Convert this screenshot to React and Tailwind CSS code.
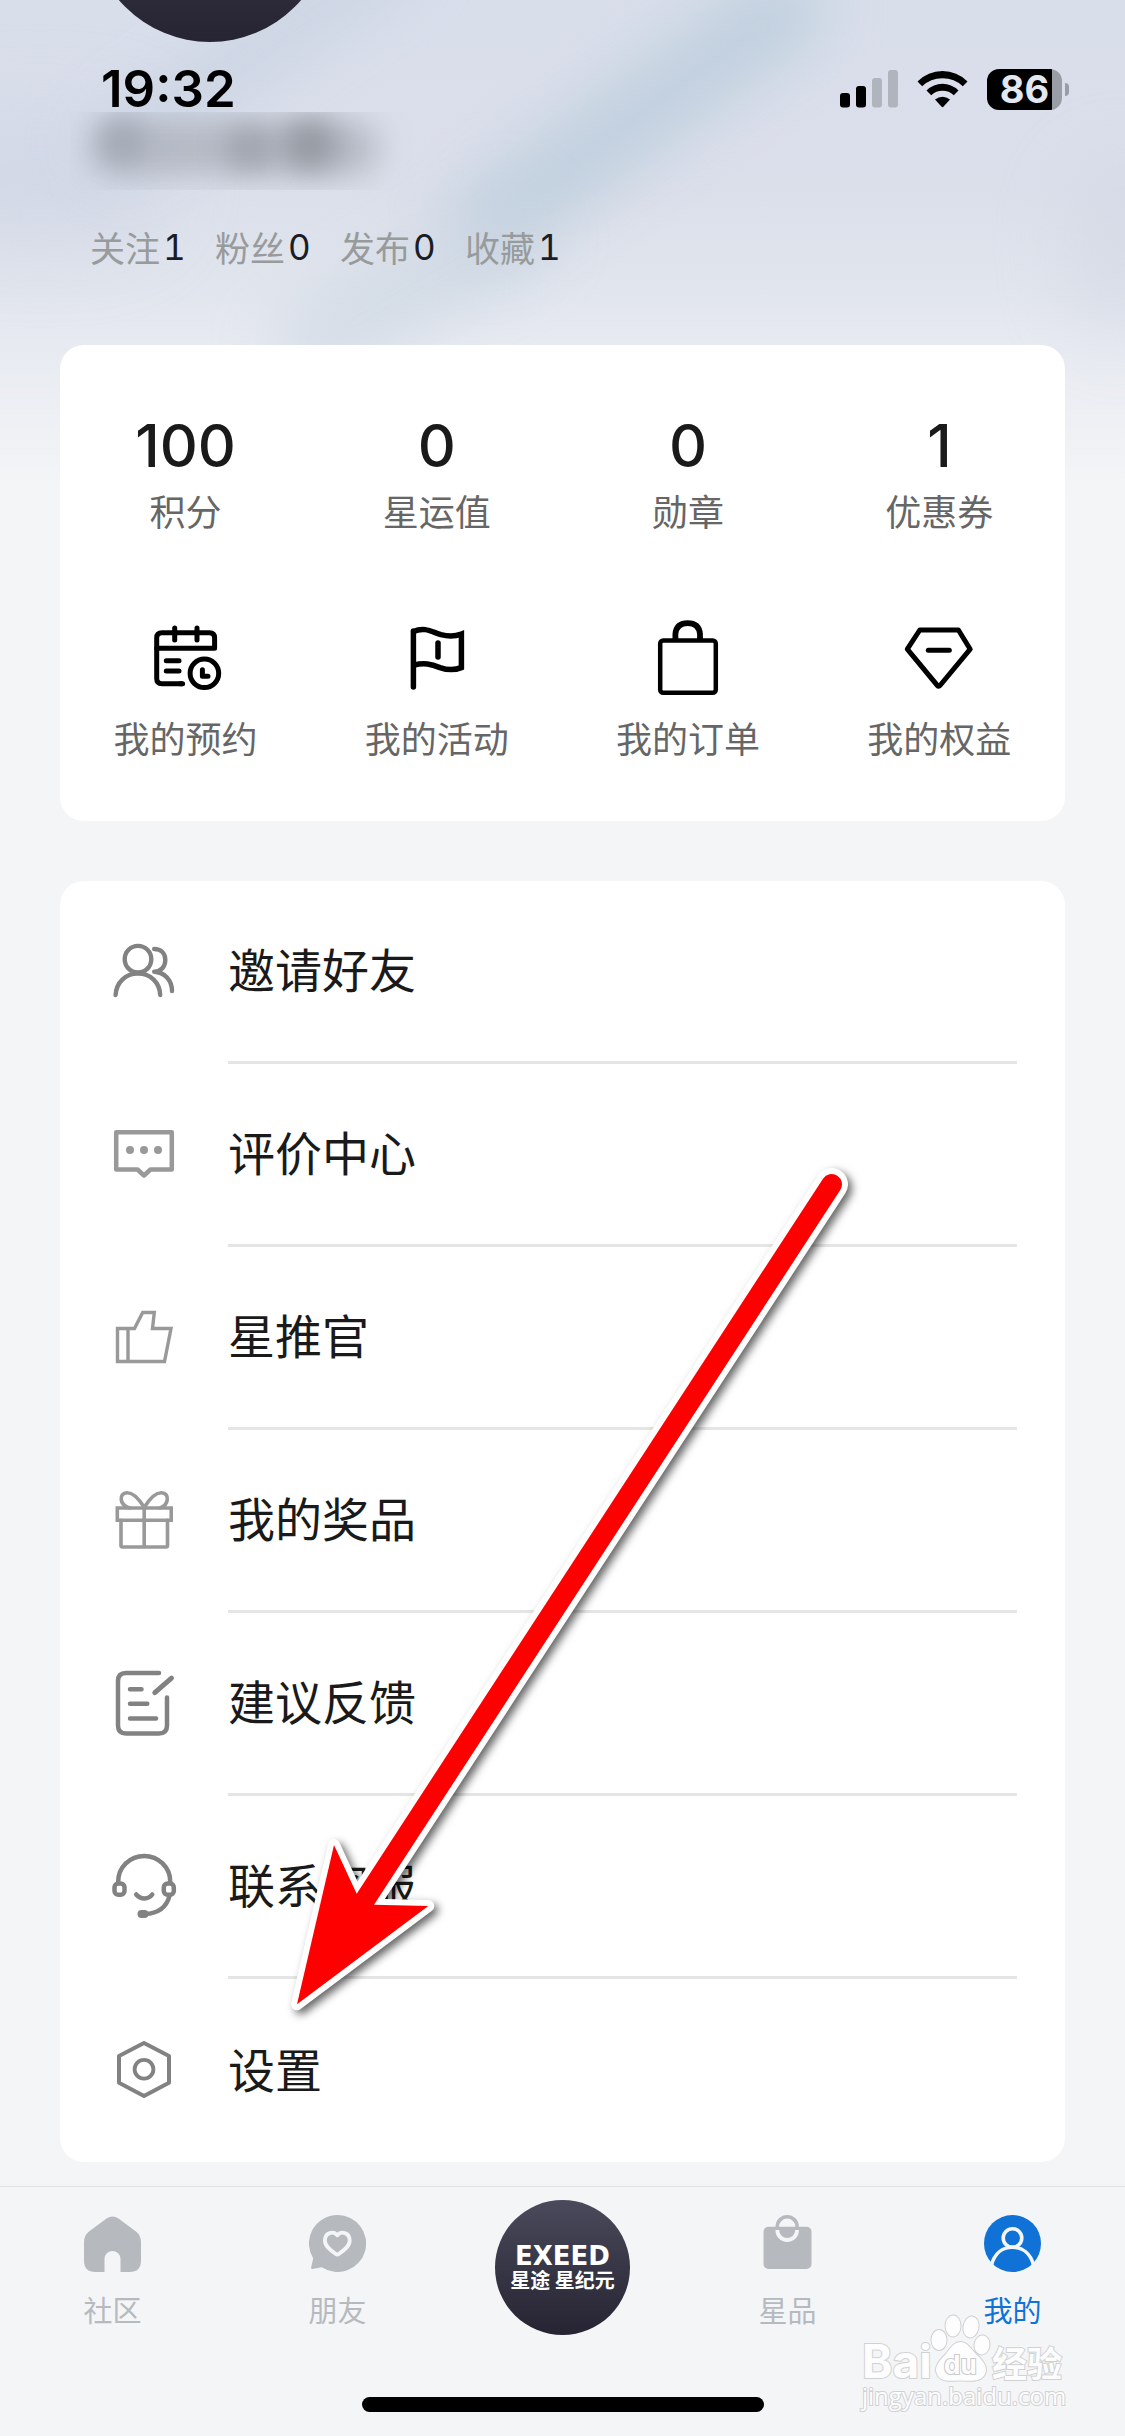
const LATIN = "font-[Inter,'Noto_Sans_CJK_SC',sans-serif]";
const CJK = "font-['Noto_Sans_CJK_SC',sans-serif]";

const counters = [
  { label: "关注", value: 1 },
  { label: "粉丝", value: 0 },
  { label: "发布", value: 0 },
  { label: "收藏", value: 1 },
];

const assets = [
  { label: "积分", value: 100 },
  { label: "星运值", value: 0 },
  { label: "勋章", value: 0 },
  { label: "优惠券", value: 1 },
];

function ShortcutIcon({ children }) {
  return (
    <svg viewBox="0 0 84 84" className="size-[84px]" fill="none" stroke="#000" strokeWidth="5" strokeLinecap="round" strokeLinejoin="round" aria-hidden="true">
      {children}
    </svg>
  );
}

const shortcuts = [
  {
    label: "我的预约",
    icon: (
      <ShortcutIcon>
        <path d="M38.5 67.7H18Q12.7 67.7 12.7 62.5V22Q12.7 16.8 18 16.8H65.4Q70.6 16.8 70.6 22V32.3" strokeLinecap="butt" />
        <path d="M36 67.7H38.6M12.7 32.3H70.6M30.7 12V24M53 12V24M22.3 44.7H35M22.3 55H35" />
        <circle cx="60.4" cy="57.3" r="14.3" />
        <path d="M58.4 53.8V60.3H64" />
      </ShortcutIcon>
    ),
  },
  {
    label: "我的活动",
    icon: (
      <ShortcutIcon>
        <path d="M18.4 15V71M18.4 15.5C30 10.5 37 16 46 18.7C54 20.8 60 20.5 66.4 18V51.6C60 54.2 53 54.4 45 51.6C36 48 29 46.5 19 49.2" strokeLinejoin="miter" strokeWidth="5.5" />
        <path d="M43 27V41" strokeWidth="5.5" />
      </ShortcutIcon>
    ),
  },
  {
    label: "我的订单",
    icon: (
      <ShortcutIcon>
        <rect x="14.2" y="24.5" width="55.6" height="52.2" rx="3" strokeWidth="4.5" />
        <path d="M29.4 24V18Q30.5 7.2 41.7 7.2T54 18V24" strokeLinecap="butt" strokeWidth="5.8" />
      </ShortcutIcon>
    ),
  },
  {
    label: "我的权益",
    icon: (
      <ShortcutIcon>
        <path d="M22.8 14H61.4L73.2 33.2L43 69.5Q41.7 71 40.4 69.5L10.3 33.2Z" />
        <path d="M31.3 34.3H52.3" />
      </ShortcutIcon>
    ),
  },
];

function MenuIcon({ color, width, children }) {
  return (
    <svg viewBox="0 0 72 72" className="size-[72px] shrink-0" fill="none" stroke={color} strokeWidth={width} strokeLinecap="round" strokeLinejoin="round" aria-hidden="true">
      {children}
    </svg>
  );
}

const menu = [
  {
    label: "邀请好友",
    icon: (
      <MenuIcon color="#828282" width="4.4">
        <circle cx="30" cy="24.2" r="13.3" />
        <path d="M7.6 60C8.2 47.5 17.5 38.5 30 38.5S51.8 47.5 52.2 60" />
        <path d="M46.2 14C53 14 57.3 18.5 57.3 25C57.3 31.5 53 36.7 46.2 36.7C56.5 37.3 64 45 64 56" />
      </MenuIcon>
    ),
  },
  {
    label: "评价中心",
    icon: (
      <MenuIcon color="#999999" width="4.5">
        <path d="M8.2 14.2H63.8V51.5H42.5L36 57.5L29.5 51.5H8.2Z" />
        <g fill="#999999" stroke="none">
          <circle cx="22" cy="32" r="4" />
          <circle cx="36" cy="32" r="4" />
          <circle cx="50" cy="32" r="4" />
        </g>
      </MenuIcon>
    ),
  },
  {
    label: "星推官",
    icon: (
      <MenuIcon color="#999999" width="3.4">
        <path d="M9.5 27.5H26.5L34.7 11.5H46.3L44.5 27.5H63L56.5 60.5H9.5ZM20 27.5V60.5" strokeLinejoin="miter" />
      </MenuIcon>
    ),
  },
  {
    label: "我的奖品",
    icon: (
      <MenuIcon color="#999999" width="3.6">
        <path d="M9.3 24H63.2V36.2H9.3Z" strokeLinejoin="miter" />
        <path d="M13 36.2V61.5Q13 63 14.5 63H58Q59.5 63 59.5 61.5V36.2M36.2 24V63" />
        <path d="M36 23C31 15 25.5 8.5 19 8.7C14.5 9 12.9 12 13.2 15.5C13.6 20 17 22.5 21.5 24" />
        <path d="M36.5 23C41.5 15 47 8.5 53.5 8.7C58 9 59.6 12 59.3 15.5C58.9 20 56 22.5 52 24" />
      </MenuIcon>
    ),
  },
  {
    label: "建议反馈",
    icon: (
      <MenuIcon color="#828282" width="4.5">
        <path d="M51 6H18Q10 6 10 14V58.5Q10 66.5 18 66.5H51Q59 66.5 59 58.5V30.5" />
        <path d="M46.8 25.7L63.5 11.2" strokeWidth="5" />
        <path d="M22 22.3H33.5M22 36.8H39.3M22 51.6H48" />
      </MenuIcon>
    ),
  },
  {
    label: "联系客服",
    icon: (
      <MenuIcon color="#828282" width="4.5">
        <path d="M10.2 33V31.5A26 25.6 0 0 1 62.2 31.5V33" />
        <rect x="6.5" y="33.4" width="10" height="11.4" rx="3.8" />
        <rect x="55.8" y="33.4" width="10" height="11.4" rx="3.8" />
        <path d="M61.5 46C58.5 57 50 63.5 37 64" />
        <path d="M33.5 64H36.5" strokeWidth="8" />
        <path d="M28.2 44.5C32.5 49.7 40.5 49.7 44.3 44.5" />
      </MenuIcon>
    ),
  },
  {
    label: "设置",
    icon: (
      <MenuIcon color="#828282" width="4">
        <path d="M36 10L61 23V49.7L36 63L11 49.7V23Z" />
        <circle cx="36" cy="36.3" r="9.4" strokeWidth="3.8" />
      </MenuIcon>
    ),
  },
];

function TabIcon({ children }) {
  return (
    <svg viewBox="0 0 57 57" className="size-[57px]" fill="currentColor" aria-hidden="true">
      {children}
    </svg>
  );
}

const HomeIcon = (
  <TabIcon>
    <path d="M22.5 3.6Q28.5 -.4 34.5 3.6L52 16.5Q57 20.5 57 27V45.5Q57 57 45.5 57H36.5V44A8 8 0 0 0 20.5 44V57H11.5Q0 57 0 45.5V27Q0 20.5 5 16.5Z" />
  </TabIcon>
);

const FriendIcon = (
  <TabIcon>
    <path d="M28.5 0A28.5 28.5 0 1 1 12.8 52.2L3.5 54Q2 54.2 2.1 52.5L4.2 43.5A28.5 28.5 0 0 1 28.5 0Z" />
    <path d="M28.3 20.3C24.5 15.5 16 17.5 15.9 25.5C15.9 31.5 22 35.5 26.7 38.9Q28.3 40 29.9 38.9C34.5 35.5 40.7 31.5 40.7 25.5C40.6 17.5 32 15.5 28.3 20.3Z" fill="none" stroke="#f4f5f7" strokeWidth="3.8" strokeLinejoin="round" />
  </TabIcon>
);

const ShopIcon = (
  <TabIcon>
    <rect x="4.5" y="11.7" width="48" height="42.3" rx="5" />
    <path d="M18.3 13V11.5A9.9 9.7 0 0 1 38.1 11.5V13" fill="none" stroke="currentColor" strokeWidth="3.6" />
    <path d="M18.3 15A9.9 10 0 0 0 38.1 15" fill="none" stroke="#f4f5f7" strokeWidth="3.8" />
  </TabIcon>
);

const MineIcon = (
  <TabIcon>
    <circle cx="28.5" cy="28.5" r="28.5" />
    <g fill="none" stroke="#f4f5f7" strokeWidth="3.6">
      <circle cx="28.5" cy="23" r="9.3" />
      <path d="M7.5 50C10.5 38.5 18.5 32.3 28.5 32.3S46.5 38.5 49.5 50" />
    </g>
  </TabIcon>
);

function Tab({ icon, label, active }) {
  return (
    <button
      type="button"
      aria-current={active ? "page" : undefined}
      className={`flex flex-col items-center gap-4 pt-7 ${active ? "text-[#1072d6]" : "text-[#b6babf]"}`}
    >
      {icon}
      <span className="text-[29px] leading-[42px]">{label}</span>
    </button>
  );
}

function Backdrop() {
  return (
    <div aria-hidden="true" className="absolute inset-x-0 top-0 -z-10 h-[520px] overflow-hidden bg-[linear-gradient(180deg,#d8deea_0px,#dbdfea_190px,#e1e5ed_290px,#e7eaf1_345px,#f4f5f7_490px)]">
      <div className="absolute -left-20 top-28 h-32 w-60 rounded-full bg-[#cfd6e5] opacity-70 blur-[40px]" />
      <div className="absolute left-[60px] top-[20px] h-16 w-96 -rotate-[35deg] rounded-full bg-[#c9d2e2] opacity-80 blur-[30px]" />
      <div className="absolute left-[440px] top-[142px] h-20 w-[440px] origin-[24%_50%] -rotate-[36deg] rounded-full bg-[#bccddc] opacity-85 blur-[30px]" />
      <div className="absolute left-[260px] top-[250px] h-20 w-[300px] -rotate-[30deg] rounded-full bg-[#c9d5e1] opacity-60 blur-[30px]" />
      <div className="absolute -right-14 top-40 h-44 w-28 rounded-full bg-[#cbd1df] opacity-40 blur-[36px]" />
    </div>
  );
}

function StatusBar() {
  return (
    <header className={`relative flex h-28 items-center justify-between pl-[101px] pr-14 pt-[66px] ${LATIN}`}>
      <time className="text-[51px] font-semibold leading-[46px] text-black">19:32</time>
      <div className="flex items-center">
        <svg viewBox="0 0 58 38" className="mr-[19px] h-[38px] w-[58px]" role="img" aria-label="信号">
          <rect x="0" y="23" width="10" height="14.5" rx="3" />
          <rect x="16" y="16" width="10" height="21.5" rx="3" />
          <g fill="#b0b4bd">
            <rect x="32" y="8" width="10" height="29.5" rx="3" />
            <rect x="48" y="0" width="10" height="37.5" rx="3" />
          </g>
        </svg>
        <svg viewBox="0 0 51 37" className="mr-[19px] h-[37px] w-[51px]" role="img" aria-label="无线网络">
          <path d="M.5 10.5Q11 0 25.5 0T50.5 10.5L45.8 15.2Q37.5 7.2 25.5 7.2T5.2 15.2Z" />
          <path d="M9.5 19.5Q16.5 12.8 25.5 12.8T41.5 19.5L36.8 24.2Q32 19.8 25.5 19.8T14.2 24.2Z" />
          <path d="M18 28.5Q25.5 22.8 33 28.5L26.6 35.6Q25.5 36.8 24.4 35.6Z" />
        </svg>
        <div className="flex h-[41px] w-[75px] items-center justify-center rounded-xl bg-[linear-gradient(90deg,#000_65px,#999da6_65px)] text-[38px] font-bold leading-none text-[#e3e7ef]">
          86
        </div>
        <div className="ml-[3px] h-[13px] w-1 rounded-r-full bg-[#999da6]" />
      </div>
    </header>
  );
}

function Arrow() {
  return (
    <svg viewBox="0 0 600 880" className="pointer-events-none absolute left-[215px] top-[274px] h-[880px] w-[600px] drop-shadow-[4px_4px_4px_rgba(0,0,0,0.6)]" aria-hidden="true">
      <path
        d="M81.700 738.700L548 23.700A10.300 10.300 0 0 1 565.300 35L99 749.700L153.300 751L22 849.300L59 690Z"
        fill="#f00"
        stroke="#fff"
        strokeWidth="12"
        strokeLinejoin="round"
        className="[paint-order:stroke]"
      />
    </svg>
  );
}

function Watermark() {
  return (
    <svg viewBox="0 0 206 100" className="pointer-events-none absolute bottom-[16px] right-[58px] h-[100px] w-[206px] overflow-visible" fill="#fdfdfd" stroke="#d0d1d3" strokeWidth="2" aria-hidden="true">
      <g className="[paint-order:stroke]">
        <text x="1" y="58" fontSize="46" fontWeight="700" fontFamily="Inter, sans-serif">Bai</text>
        <ellipse cx="78" cy="20" rx="7.5" ry="10" />
        <ellipse cx="92" cy="6" rx="7.5" ry="10.5" />
        <ellipse cx="110" cy="7" rx="7.5" ry="10.5" transform="rotate(10 110 7)" />
        <ellipse cx="121" cy="25" rx="7.5" ry="9.5" transform="rotate(8 121 25)" />
        <path d="M99.5 22C92 22 88 31 83 36C77 42 73 48 76 54C79 62 88 61 99.5 60.5C111 61 120 62 124 54C127 48 123 42 117 36C111 31 107 22 99.5 22Z" />
        <text x="83" y="54" fontSize="26" fontWeight="700" fontFamily="Inter, sans-serif" stroke="#c9cacd">du</text>
        <text x="131" y="57" fontSize="35" fontWeight="700" fontFamily="'Noto Sans CJK SC', sans-serif">经验</text>
        <text x="1" y="85" fontSize="24" fontFamily="'Open Sans', sans-serif">jingyan.baidu.com</text>
      </g>
    </svg>
  );
}

export default function App() {
  return (
    <div className={`relative isolate flex min-h-screen flex-col overflow-hidden bg-[#f4f5f7] ${CJK}`}>
      <Backdrop />
      <div aria-hidden="true" className="absolute -top-[198px] left-[90px] size-60 rounded-full bg-linear-to-b from-[#4a4a5c] to-[#262432]" />
      <StatusBar />

      <section>
        <div aria-label="昵称" className="relative ml-[70px] h-[78px] w-[350px] overflow-hidden">
          <div className="absolute left-5 top-2 h-14 w-[290px] rounded-full bg-[#a9aeb8] opacity-75 blur-[16px]" />
          <div className="absolute left-7 top-1 h-12 w-12 rounded-full bg-[#9aa1ab] opacity-60 blur-[12px]" />
          <div className="absolute left-[155px] top-3 h-12 w-12 rounded-full bg-[#888c93] opacity-50 blur-[14px]" />
          <div className="absolute left-[212px] top-1 h-14 w-14 rounded-full bg-[#80848b] opacity-60 blur-[14px]" />
        </div>
        <ul className="mt-[33px] flex pl-[90px] text-[35px] leading-[48px]">
          {counters.map((c) => (
            <li key={c.label} className="flex w-[125px] items-center gap-[3px] text-[#979b9c]">
              {c.label}
              <span className={`tabular-nums text-[#1a1c26] ${LATIN}`}>{c.value}</span>
            </li>
          ))}
        </ul>
      </section>

      <main className="mt-[74px] flex flex-col gap-[60px] px-[60px]">
        <section className="grid grid-cols-4 rounded-3xl bg-white pb-[60px] pt-[65px] text-[36px] leading-[48px] text-[#666]">
          {assets.map((a) => (
            <button type="button" key={a.label} className="flex flex-col items-center gap-1">
              <span className={`text-[59px] font-medium leading-[72px] text-[#1a1a1a] ${LATIN}`}>{a.value}</span>
              <span>{a.label}</span>
            </button>
          ))}
          {shortcuts.map((s) => (
            <button type="button" key={s.label} className="mt-[82px] flex flex-col items-center gap-[13px]">
              {s.icon}
              <span>{s.label}</span>
            </button>
          ))}
        </section>

        <section className="relative rounded-3xl bg-white px-12">
          <ul>
            {menu.map((m, i) => (
              <li key={m.label}>
                <a href="#" className="flex h-[183px] items-stretch gap-12">
                  <span className="flex items-center pb-[3px]">{m.icon}</span>
                  <span className={`flex flex-1 items-center pb-[6px] text-[47px] leading-[64px] text-[#1a1a1a] ${i < menu.length - 1 ? "border-b-[3px] border-[#e5e5e5]" : ""}`}>
                    {m.label}
                  </span>
                </a>
              </li>
            ))}
          </ul>
          <Arrow />
        </section>
      </main>

      <nav className="relative mt-6 border-t border-[#e1e2e5] pb-6">
        <div className="grid grid-cols-5 items-start">
          <Tab icon={HomeIcon} label="社区" />
          <Tab icon={FriendIcon} label="朋友" />
          <div className="flex justify-center pt-[13px]">
            <button type="button" className="flex size-[135px] flex-col items-center justify-center rounded-full bg-linear-to-b from-[#4a4a5c] to-[#262432] text-white">
              <span className="font-['DejaVu_Sans',sans-serif] text-[26px] font-bold leading-[24px]">EXEED</span>
              <span className="text-[20px] font-bold leading-[24px]">星途 星纪元</span>
            </button>
          </div>
          <Tab icon={ShopIcon} label="星品" />
          <Tab icon={MineIcon} label="我的" active />
        </div>
        <div className="mx-auto mt-[62px] h-[15px] w-[402px] rounded-full bg-black" />
        <Watermark />
      </nav>
    </div>
  );
}
